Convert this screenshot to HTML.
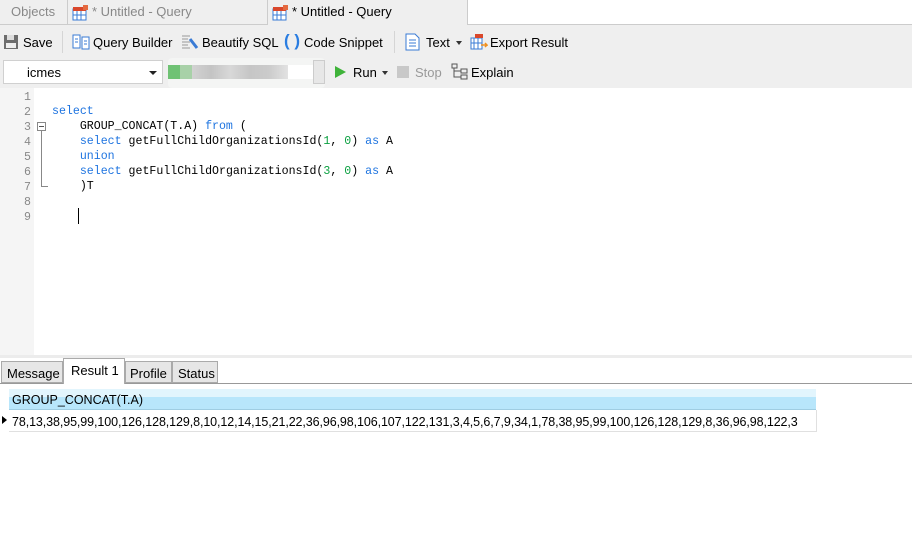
<!DOCTYPE html>
<html><head><style>
*{margin:0;padding:0;box-sizing:border-box}
body{width:912px;height:535px;background:#fff;font-family:"Liberation Sans",sans-serif;font-size:13px;color:#000;position:relative;overflow:hidden}
.a{position:absolute}
.tabbar{left:0;top:0;width:912px;height:25px;background:#fff}
.tb{top:0;height:25px;background:#efefef;border-right:1px solid #ccc;border-bottom:1px solid #ccc;color:#888;font-size:13px;line-height:24px}
.tb.act{background:#efefef;color:#000;border-bottom:none}
.tool{left:0;top:25px;width:912px;height:63px;background:#efefef}
.t{font-size:13px;line-height:16px;white-space:nowrap}
.gut{left:0;top:88px;width:34px;height:267px;background:#f5f5f5}
.ln{font-family:"Liberation Mono",monospace;font-size:11.6px;color:#888;width:31px;text-align:right;line-height:15px}
.code{font-family:"Liberation Mono",monospace;font-size:11.6px;line-height:15px;white-space:pre;color:#000;left:52px;top:104px}
.k{color:#1e74e0}.n{color:#0aa040}
</style></head><body>
<div class="a tabbar"></div>
<div class="a tb" style="left:0;width:68px;padding-left:11px">Objects</div>
<div class="a tb" style="left:68px;width:200px;padding-left:24px">* Untitled - Query</div>
<div class="a tb act" style="left:268px;width:200px;padding-left:24px">* Untitled - Query</div>
<div class="a" style="left:468px;top:24px;width:444px;height:1px;background:#ccc"></div>
<!-- tab icons -->
<svg class="a" style="left:72px;top:4px" width="18" height="18"><rect x="1" y="5" width="13" height="11" fill="#fff" stroke="#3a7bd5"/><rect x="1" y="3" width="13" height="4" fill="#d9472b"/><path d="M5 7v9M9 7v9M1 11h13" stroke="#3a7bd5"/><rect x="11" y="1" width="5" height="5" fill="#e56a40"/></svg>
<svg class="a" style="left:272px;top:4px" width="18" height="18"><rect x="1" y="5" width="13" height="11" fill="#fff" stroke="#3a7bd5"/><rect x="1" y="3" width="13" height="4" fill="#d9472b"/><path d="M5 7v9M9 7v9M1 11h13" stroke="#3a7bd5"/><rect x="11" y="1" width="5" height="5" fill="#e56a40"/></svg>
<div class="a tool"></div>
<!-- toolbar row 1 -->
<svg class="a" style="left:3px;top:34px" width="16" height="16"><rect x="1" y="1" width="14" height="14" fill="#6d6d6d"/><rect x="4" y="1" width="7" height="5" fill="#ddd"/><rect x="3" y="9" width="10" height="5" fill="#eee"/></svg>
<div class="a t" style="left:23px;top:35px">Save</div>
<div class="a" style="left:62px;top:31px;width:1px;height:22px;background:#d5d5d5"></div>
<svg class="a" style="left:72px;top:34px" width="18" height="16"><rect x="1" y="1" width="7" height="13" fill="#fff" stroke="#3a7bd5"/><rect x="10" y="3" width="7" height="12" fill="#fff" stroke="#3a7bd5"/><path d="M3 5h3M3 8h3M12 7h3M12 10h3" stroke="#3a7bd5"/></svg>
<div class="a t" style="left:93px;top:35px">Query Builder</div>
<svg class="a" style="left:181px;top:33px" width="18" height="18"><path d="M1 3h8M1 6h6M1 9h8M1 12h6M1 15h8" stroke="#999"/><path d="M9 6l7 9" stroke="#3a7bd5" stroke-width="3"/></svg>
<div class="a t" style="left:202px;top:35px">Beautify SQL</div>
<div class="a" style="left:284px;top:31px;font-size:17px;color:#2a7de1;font-weight:bold;line-height:20px">( )</div>
<div class="a t" style="left:304px;top:35px">Code Snippet</div>
<div class="a" style="left:394px;top:31px;width:1px;height:22px;background:#d5d5d5"></div>
<svg class="a" style="left:405px;top:33px" width="16" height="18"><path d="M1 1h9l4 4v12H1z" fill="#fff" stroke="#3a7bd5"/><path d="M4 7h7M4 10h7M4 13h7" stroke="#3a7bd5"/></svg>
<div class="a t" style="left:426px;top:35px">Text</div>
<div class="a" style="left:456px;top:41px;border:3px solid transparent;border-top:4px solid #333"></div>
<svg class="a" style="left:470px;top:33px" width="18" height="18"><rect x="1" y="5" width="11" height="11" fill="#fff" stroke="#3a7bd5"/><path d="M4 5v11M8 5v11M1 10h11" stroke="#3a7bd5"/><rect x="5" y="1" width="8" height="4" fill="#d9472b"/><path d="M11 12h6l-2-2M17 12l-2 2" stroke="#f09020" stroke-width="1.5" fill="none"/></svg>
<div class="a t" style="left:490px;top:35px">Export Result</div>
<!-- row 2 -->
<div class="a" style="left:3px;top:60px;width:160px;height:24px;background:#fff;border:1px solid #d0d0d0"></div>
<div class="a t" style="left:27px;top:65px">icmes</div>
<div class="a" style="left:149px;top:71px;border:4px solid transparent;border-top:4px solid #222"></div>
<div class="a" style="left:168px;top:58px;width:157px;height:30px;background:#f4f5f4;border-radius:4px"></div>
<div class="a" style="left:168px;top:65px;width:12px;height:14px;background:#6fc274"></div>
<div class="a" style="left:180px;top:65px;width:12px;height:14px;background:#a8d1a8"></div>
<div class="a" style="left:192px;top:65px;width:96px;height:14px;background:linear-gradient(90deg,#d2d2d2,#c4c4c4,#d8d8d8,#c6c6c6,#cbcbcb,#e2e2e2)"></div>
<div class="a" style="left:288px;top:65px;width:25px;height:14px;background:#fff"></div>
<div class="a" style="left:313px;top:60px;width:12px;height:24px;background:#e7e7e7;border:1px solid #ccc"></div>
<div class="a" style="left:335px;top:66px;border:6px solid transparent;border-left:11px solid #3fb33a;border-right:0"></div>
<div class="a t" style="left:353px;top:65px">Run</div>
<div class="a" style="left:382px;top:71px;border:3px solid transparent;border-top:4px solid #333"></div>
<div class="a" style="left:397px;top:66px;width:12px;height:12px;background:#c8c8c8"></div>
<div class="a t" style="left:415px;top:65px;color:#999">Stop</div>
<svg class="a" style="left:451px;top:63px" width="18" height="18"><rect x="1" y="1" width="5" height="4" fill="none" stroke="#555"/><rect x="10" y="6" width="6" height="4" fill="none" stroke="#555"/><rect x="10" y="12" width="6" height="4" fill="none" stroke="#555"/><path d="M3 5v9h7M3 8h7" stroke="#555" fill="none"/></svg>
<div class="a t" style="left:471px;top:65px">Explain</div>
<!-- editor -->
<div class="a gut"></div>
<div class="a" style="left:0;top:90px">
<div class="ln">1</div><div class="ln">2</div><div class="ln">3</div><div class="ln">4</div><div class="ln">5</div><div class="ln">6</div><div class="ln">7</div><div class="ln">8</div><div class="ln">9</div></div>
<div class="a" style="left:37px;top:122px;width:9px;height:9px;border:1px solid #888;background:#fff"></div>
<div class="a" style="left:39px;top:126px;width:5px;height:1px;background:#555"></div>
<div class="a" style="left:41px;top:131px;width:1px;height:55px;background:#888"></div>
<div class="a" style="left:41px;top:186px;width:7px;height:1px;background:#888"></div>
<div class="a code"><span class="k">select</span>
    GROUP_CONCAT(T.A) <span class="k">from</span> (
    <span class="k">select</span> getFullChildOrganizationsId(<span class="n">1</span>, <span class="n">0</span>) <span class="k">as</span> A
    <span class="k">union</span>
    <span class="k">select</span> getFullChildOrganizationsId(<span class="n">3</span>, <span class="n">0</span>) <span class="k">as</span> A
    )T</div>
<div class="a" style="left:78px;top:208px;width:1px;height:16px;background:#000"></div>
<!-- splitter -->
<div class="a" style="left:0;top:355px;width:912px;height:3px;background:#ececec"></div>
<div class="a" style="left:0;top:383px;width:912px;height:1px;background:#999"></div>
<div class="a t" style="left:1px;top:361px;width:62px;height:22px;background:#e6e6e6;border:1px solid #aaa;padding:4px 0 0 5px">Message</div>
<div class="a t" style="left:63px;top:358px;width:62px;height:26px;background:#fff;border:1px solid #aaa;border-bottom:none;padding:4px 0 0 7px">Result 1</div>
<div class="a t" style="left:125px;top:361px;width:47px;height:22px;background:#e6e6e6;border:1px solid #aaa;padding:4px 0 0 4px">Profile</div>
<div class="a t" style="left:172px;top:361px;width:46px;height:22px;background:#e6e6e6;border:1px solid #aaa;padding:4px 0 0 5px">Status</div>
<!-- grid -->
<div class="a" style="left:9px;top:389px;width:807px;height:21px;background:linear-gradient(#e2f5fd 0,#e2f5fd 8px,#b8e6fb 8px);border-bottom:1px solid #9fcde2"></div>
<div class="a t" style="left:12px;top:392px;font-size:12.5px">GROUP_CONCAT(T.A)</div>
<div class="a" style="left:9px;top:410px;width:808px;height:22px;border-right:1px solid #e0e0e0;border-bottom:1px solid #e0e0e0"></div>
<div class="a" style="left:2px;top:416px;border:4px solid transparent;border-left:5px solid #000;border-right:0"></div>
<div class="a t" style="left:12px;top:414px;font-size:12.5px;letter-spacing:-0.1px">78,13,38,95,99,100,126,128,129,8,10,12,14,15,21,22,36,96,98,106,107,122,131,3,4,5,6,7,9,34,1,78,38,95,99,100,126,128,129,8,36,96,98,122,3</div>
</body></html>
